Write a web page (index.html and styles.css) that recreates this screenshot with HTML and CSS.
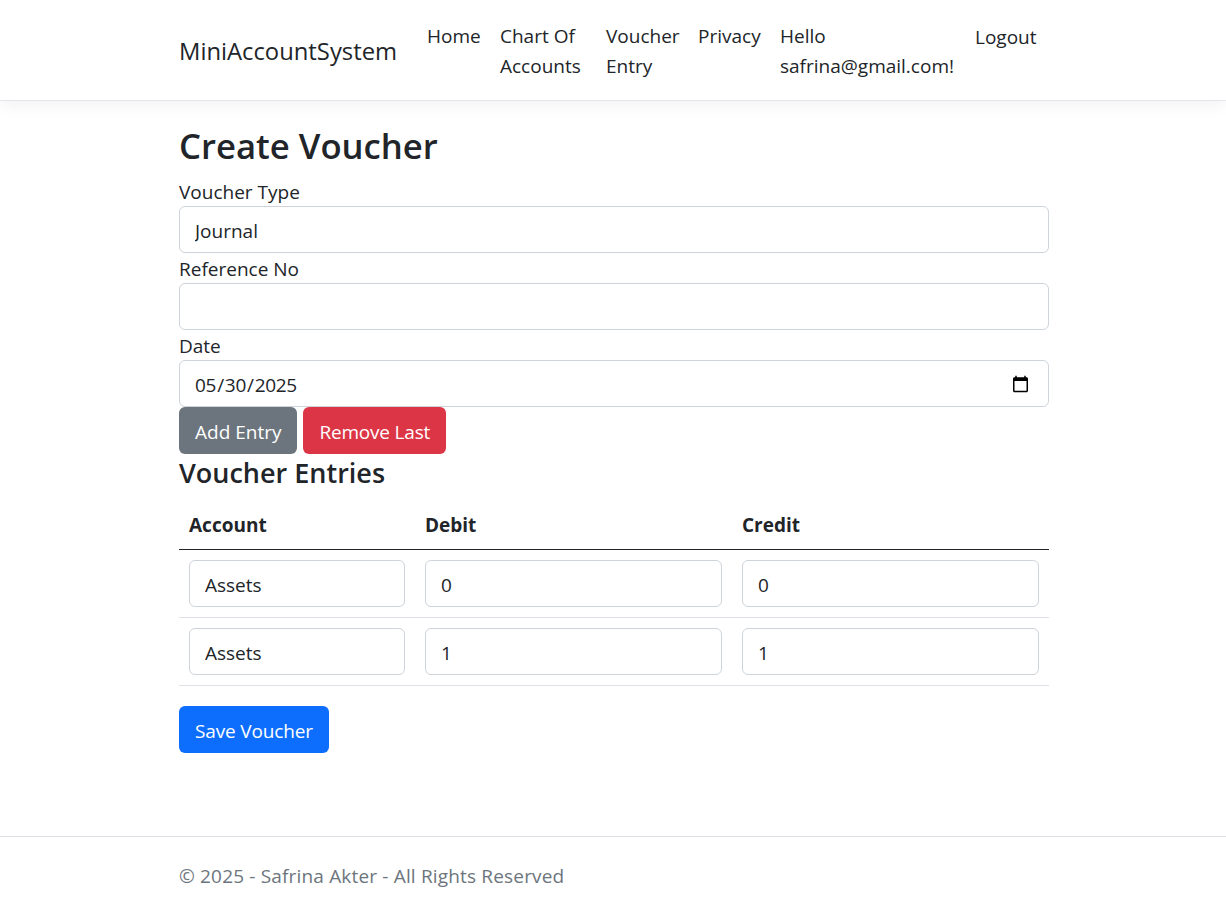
FILE: index.html
```html
<!DOCTYPE html>
<html lang="en">
<head>
<meta charset="UTF-8">
<meta name="viewport" content="width=device-width, initial-scale=1.0">
<title>Create Voucher - MiniAccountSystem</title>
<link rel="stylesheet" href="styles.css">
</head>
<body>

<header class="site-header">
	<nav class="container navbar">
		<a class="brand" href="#">MiniAccountSystem</a>
		<ul class="nav-list">
			<li class="nav-home"><a class="nav-link" href="#">Home</a></li>
			<li class="nav-chart"><a class="nav-link" href="#">Chart Of Accounts</a></li>
			<li class="nav-voucher"><a class="nav-link" href="#">Voucher Entry</a></li>
			<li class="nav-privacy"><a class="nav-link" href="#">Privacy</a></li>
			<li class="nav-hello"><a class="nav-link" href="#">Hello safrina@gmail.com!</a></li>
			<li class="nav-logout"><a class="nav-link" href="#">Logout</a></li>
		</ul>
	</nav>
</header>

<main class="container">
	<h1>Create Voucher</h1>
	<form>
		<label for="type">Voucher Type</label>
		<select id="type" class="form-control">
			<option>Journal</option>
		</select>

		<label for="ref">Reference No</label>
		<input type="text" id="ref" class="form-control">

		<label for="date">Date</label>
		<input type="date" id="date" class="form-control form-date" value="2025-05-30">

		<div class="actions">
			<button type="button" class="btn btn-grey">Add Entry</button>
			<button type="button" class="btn btn-red">Remove Last</button>
		</div>

		<h3>Voucher Entries</h3>
		<table class="entries">
			<thead>
				<tr>
					<th class="col-account">Account</th>
					<th>Debit</th>
					<th>Credit</th>
				</tr>
			</thead>
			<tbody>
				<tr>
					<td><select class="form-control"><option>Assets</option></select></td>
					<td><input type="number" class="form-control" value="0"></td>
					<td><input type="number" class="form-control" value="0"></td>
				</tr>
				<tr>
					<td><select class="form-control"><option>Assets</option></select></td>
					<td><input type="number" class="form-control" value="1"></td>
					<td><input type="number" class="form-control" value="1"></td>
				</tr>
			</tbody>
		</table>

		<button type="submit" class="btn btn-blue">Save Voucher</button>
	</form>
</main>

<footer class="site-footer">
	<div class="container">&copy; 2025 - Safrina Akter - All Rights Reserved</div>
</footer>

</body>
</html>
```

FILE: styles.css
```css
* {
	box-sizing: border-box;
}
body {
	font-family: "Open Sans", Arial, sans-serif;
	font-size: 19px;
	line-height: 30px;
	color: #212529;
	background-color: #fff;
	margin: 0;
	min-height: 100vh;
	display: flex;
	flex-direction: column;
}
a {
	color: inherit;
	text-decoration: none;
}
.container {
	width: 870px;
	margin: 0 177px 0 179px;
}

/* Header */
.site-header {
	height: 101px;
	border-bottom: 1px solid #e3e6ea;
	box-shadow: 0 5px 15px rgba(0, 0, 0, 0.05);
	margin-bottom: 20px;
}
.navbar {
	display: flex;
	align-items: center;
	height: 100px;
}
.brand {
	font-size: 23.8px;
	width: 238px;
	padding-top: 2px;
}
.nav-list {
	display: flex;
	list-style: none;
	margin: 0;
	padding: 0;
	align-self: flex-start;
	padding-top: 21px;
}
.nav-link {
	display: block;
	padding: 0 10px;
}
.nav-home {
	width: 73px;
}
.nav-chart {
	width: 106px;
}
.nav-voucher {
	width: 92px;
}
.nav-privacy {
	width: 82px;
}
.nav-hello {
	width: 195px;
}
.nav-logout {
	padding-top: 1px;
}

/* Form */
h1 {
	font-size: 34.7px;
	font-weight: 600;
	line-height: 45px;
	padding-top: 2px;
	height: 45px;
	margin: 0 0 10px;
}
h3 {
	font-size: 27px;
	font-weight: 600;
	line-height: 35px;
	padding-top: 1px;
	height: 35px;
	margin: 0 0 10px;
}
label {
	display: block;
	height: 30px;
	padding-top: 1px;
}
.form-control {
	display: block;
	width: 100%;
	height: 47px;
	padding: 8px 15px 6px;
	font: inherit;
	color: #212529;
	background-color: #fff;
	border: 1px solid #ced4da;
	border-radius: 6px;
	appearance: none;
	-moz-appearance: textfield;
}
.form-date {
	padding-left: 14px;
	padding-right: 16px;
	letter-spacing: -0.3px;
}
input[type=number]::-webkit-inner-spin-button {
	display: none;
}
.actions {
	display: flex;
	gap: 6px;
}
.btn {
	height: 47px;
	padding: 2px 15px 0;
	font: inherit;
	color: #fff;
	border: 1px solid transparent;
	border-radius: 6px;
	cursor: pointer;
}
.btn-grey {
	background-color: #6c757d;
}
.btn-red {
	background-color: #dc3545;
	letter-spacing: -0.2px;
}
.btn-blue {
	background-color: #0d6efd;
	letter-spacing: -0.15px;
}

/* Table */
.entries {
	width: 100%;
	border-collapse: collapse;
	table-layout: fixed;
	margin-bottom: 20px;
}
.entries th {
	text-align: left;
	font-weight: 700;
	padding: 11px 10px 9px;
	border-bottom: 1px solid #212529;
}
.col-account {
	width: 236px;
}
.entries td {
	padding: 10px;
	border-bottom: 1px solid #dee2e6;
}

/* Footer */
.site-footer {
	margin-top: auto;
	height: 75px;
	line-height: 78px;
	border-top: 1px solid #dee2e6;
	color: #6c757d;
	letter-spacing: 0.17px;
}
```
